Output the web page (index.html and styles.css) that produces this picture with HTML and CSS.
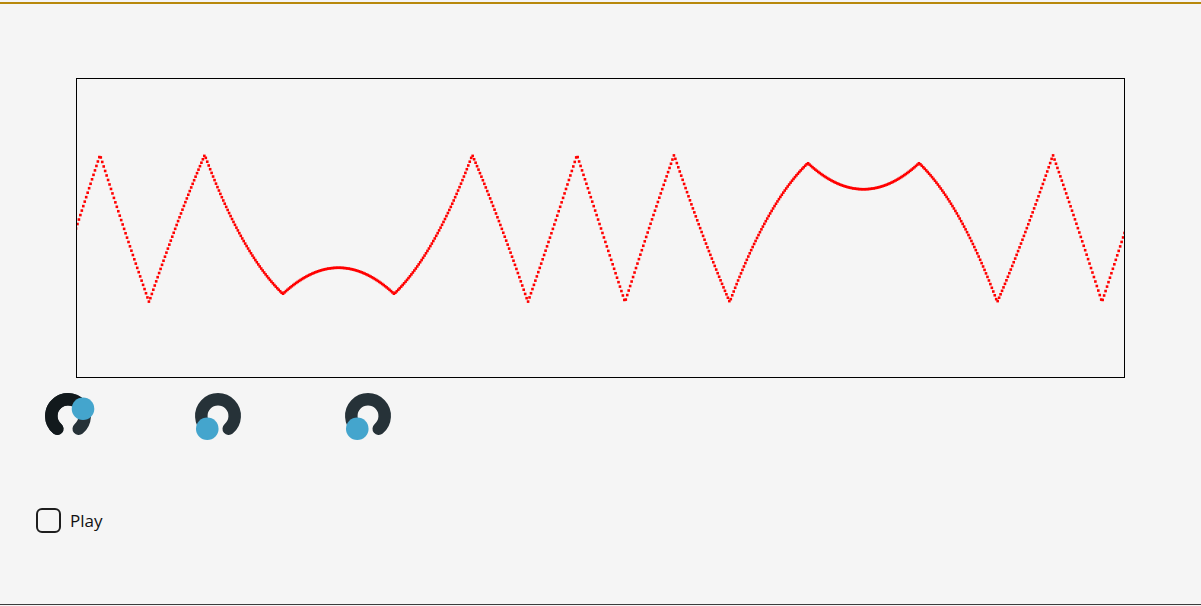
FILE: index.html
```html
<!DOCTYPE html>
<html lang="en">
<head>
  <meta charset="UTF-8">
  <title>Wave Folder</title>
  <meta name="viewport" content="width=device-width, initial-scale=1.0">
  <link rel="stylesheet" href="styles.css">
</head>
<body>

<div class="topbar"></div>

<div class="scope">
  <canvas id="wave" width="1047" height="298"></canvas>
</div>

<div class="knobs">
  <svg class="knob" width="60" height="60" viewBox="0 0 60 60">
    <path class="track" d="M19.27 42.79 A16.7 16.7 0 1 1 40.73 42.79"/>
    <path class="fill" d="M19.27 42.79 A16.7 16.7 0 1 1 45.01 22.68"/>
    <circle class="dot" cx="45.01" cy="22.68" r="11.3"/>
  </svg>
  <svg class="knob" width="60" height="60" viewBox="0 0 60 60">
    <path class="track" d="M19.27 42.79 A16.7 16.7 0 1 1 40.73 42.79"/>
    <circle class="dot" cx="19.27" cy="42.79" r="11.3"/>
  </svg>
  <svg class="knob" width="60" height="60" viewBox="0 0 60 60">
    <path class="track" d="M19.27 42.79 A16.7 16.7 0 1 1 40.73 42.79"/>
    <circle class="dot" cx="19.27" cy="42.79" r="11.3"/>
  </svg>
</div>

<label class="play">
  <span class="check"></span>
  <span>Play</span>
</label>

<div class="footer"></div>

<script>
const canvas = document.getElementById('wave');
const ctx = canvas.getContext('2d');

// page position of the canvas' inner area
const offX = 77;
const offY = 79;

const center = 228.5;
const height = 73.5;

// |sin| -> drive, piecewise so the folds land where they should
const sinPts = [0, 0.1432, 0.4234, 0.6963, 0.9451, 1];
const drivePts = [0, 1, 3, 5, 7, 7.4];

function drive(v) {
  for (let i = 1; i < sinPts.length; i++) {
    if (v <= sinPts[i]) {
      const t = (v - sinPts[i - 1]) / (sinPts[i] - sinPts[i - 1]);
      return drivePts[i - 1] + t * (drivePts[i] - drivePts[i - 1]);
    }
  }
  return drivePts[drivePts.length - 1];
}

function fold(s) {
  let t = (s + 1) % 4;
  if (t < 0) t += 4;
  return t < 2 ? t - 1 : 3 - t;
}

ctx.fillStyle = '#ff0000';
for (let i = 0; i <= 720; i++) {
  const theta = i * Math.PI / 360;
  const sn = Math.sin(theta);
  const s = Math.sign(sn) * drive(Math.abs(sn));
  const a = Math.abs(s);
  let gain = 1;
  if (a > 7) gain = 0.89;
  else if (a > 5) gain = 1 - 0.11 * (a - 5) / 2;
  const x = 76 + i * 1050 / 720;
  const y = center - height * gain * fold(s);
  ctx.fillRect(x - 1.3 - offX, y - 1.3 - offY, 2.6, 2.6);
}
</script>

</body>
</html>
```

FILE: styles.css
```css
body {
  margin: 0;
  background: #f5f5f5;
  font-family: 'Open Sans', sans-serif;
  color: #111;
  overflow: hidden;
}
.topbar {
  height: 2px;
  margin-top: 2px;
  background: #b8880b;
}
.scope {
  margin: 74px 0 0 76px;
}
.scope canvas {
  display: block;
  border: 1px solid #000;
}
.knobs {
  display: flex;
  gap: 90px;
  margin: 8px 0 0 38px;
}
.knob {
  display: block;
}
.knob .track,
.knob .fill {
  fill: none;
  stroke-width: 12.5;
  stroke-linecap: round;
}
.knob .track {
  stroke: #263238;
}
.knob .fill {
  stroke: #12191c;
}
.knob .dot {
  fill: #44a5cd;
}
.play {
  display: flex;
  align-items: center;
  gap: 9px;
  margin: 62px 0 0 36px;
  font-size: 17px;
  cursor: pointer;
}
.check {
  width: 21px;
  height: 21px;
  border: 2px solid #1e1e1e;
  border-radius: 6px;
}
.footer {
  margin-top: 71px;
  border-top: 1px solid #3c3c3c;
  height: 40px;
}
```
